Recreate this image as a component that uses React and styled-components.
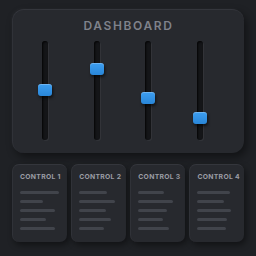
import React from 'react';
import styled, { createGlobalStyle } from 'styled-components';

const GlobalStyle = createGlobalStyle`
  html, body {
    margin: 0;
    padding: 0;
    background: #1f2125;
  }
  body {
    font-family: Inter, "Noto Sans", sans-serif;
  }
`;

const Page = styled.div`
  width: 256px;
  height: 256px;
  box-sizing: border-box;
  padding: 9px 12px 0;
  display: flex;
  flex-direction: column;
  gap: 11px;
  background: #1f2125;
`;

const Panel = styled.div`
  height: 144px;
  box-sizing: border-box;
  border-radius: 12px;
  background: #27292e;
  border-top: 1px solid #34363c;
  border-left: 1px solid #303238;
  box-shadow: 3px 4px 8px rgba(0, 0, 0, 0.45), -1px -1px 3px rgba(255, 255, 255, 0.03);
  display: flex;
  flex-direction: column;
`;

const Title = styled.div`
  margin-top: 7px;
  height: 17px;
  text-align: center;
  font-size: 12px;
  font-weight: 600;
  letter-spacing: 1.6px;
  color: #7f828b;
  line-height: 17px;
`;

const Sliders = styled.div`
  margin-top: 7px;
  padding-left: 6px;
  display: grid;
  grid-template-columns: repeat(4, 51.7px);
`;

const SliderCol = styled.div`
  display: flex;
  justify-content: center;
`;

const Track = styled.div`
  position: relative;
  width: 6px;
  height: 99px;
  border-radius: 3px;
  background: #141518;
  box-shadow: inset 1px 1px 2px rgba(0, 0, 0, 0.8), 1px 1px 0 rgba(255, 255, 255, 0.05);
`;

const Knob = styled.div`
  position: absolute;
  left: -4px;
  top: ${({ $top }) => $top}px;
  width: 14px;
  height: 12px;
  border-radius: 3px;
  background: linear-gradient(#3d9ef0, #2986d8);
  box-shadow: inset 0 1px 0 rgba(255, 255, 255, 0.25), 1px 2px 3px rgba(0, 0, 0, 0.6);
`;

const Cards = styled.div`
  display: grid;
  grid-template-columns: repeat(4, minmax(0, 1fr));
  gap: 4.6px;
`;

const Card = styled.div`
  height: 78px;
  box-sizing: border-box;
  border-radius: 7px;
  background: #27292e;
  border-top: 1px solid #34363c;
  border-left: 1px solid #303238;
  box-shadow: 2px 3px 6px rgba(0, 0, 0, 0.45);
  padding: 8px 7px 0;
  display: flex;
  flex-direction: column;
`;

const CardTitle = styled.div`
  font-size: 6.8px;
  font-weight: 700;
  letter-spacing: 0.3px;
  color: #9a9ca4;
  line-height: 8px;
  white-space: nowrap;
`;

const Lines = styled.div`
  margin-top: 9.5px;
  display: flex;
  flex-direction: column;
  gap: 6px;
`;

const Line = styled.div`
  width: ${({ $w }) => $w}px;
  height: 3px;
  border-radius: 1.5px;
  background: #41444b;
`;

const knobs = [43, 22, 51, 71];

const cards = [
  { name: 'CONTROL 1', lines: [39, 23, 35, 26, 35] },
  { name: 'CONTROL 2', lines: [28, 36, 27, 32, 25] },
  { name: 'CONTROL 3', lines: [26, 35, 29, 25, 31] },
  { name: 'CONTROL 4', lines: [33, 27, 34, 30, 29] },
];

export default function App() {
  return (
    <>
      <GlobalStyle />
      <Page>
        <Panel>
          <Title>DASHBOARD</Title>
          <Sliders>
            {knobs.map((t, i) => (
              <SliderCol key={i}>
                <Track>
                  <Knob $top={t} />
                </Track>
              </SliderCol>
            ))}
          </Sliders>
        </Panel>
        <Cards>
          {cards.map((c) => (
            <Card key={c.name}>
              <CardTitle>{c.name}</CardTitle>
              <Lines>
                {c.lines.map((w, i) => (
                  <Line key={i} $w={w} />
                ))}
              </Lines>
            </Card>
          ))}
        </Cards>
      </Page>
    </>
  );
}
